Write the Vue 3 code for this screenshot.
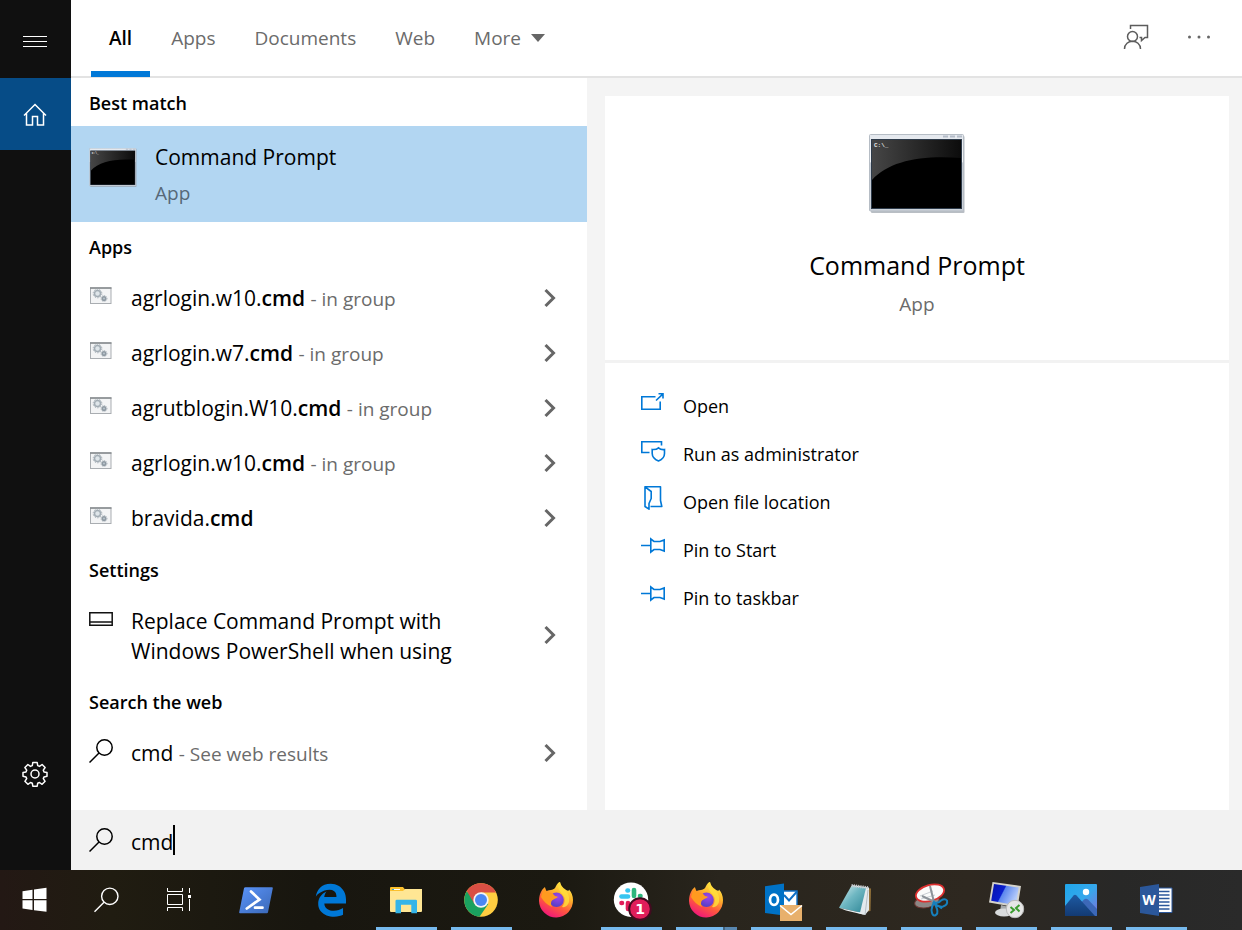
<script setup>
import { ref } from 'vue'

const query = ref('cmd')
const tabs = ['All', 'Apps', 'Documents', 'Web', 'More']
const activeTab = ref('All')

const apps = [
  { name: 'agrlogin.w10.', hint: '- in group' },
  { name: 'agrlogin.w7.', hint: '- in group' },
  { name: 'agrutblogin.W10.', hint: '- in group' },
  { name: 'agrlogin.w10.', hint: '- in group' },
  { name: 'bravida.', hint: '' },
]

const actions = [
  { label: 'Open', icon: 'open' },
  { label: 'Run as administrator', icon: 'admin' },
  { label: 'Open file location', icon: 'folder' },
  { label: 'Pin to Start', icon: 'pin' },
  { label: 'Pin to taskbar', icon: 'pin' },
]

const pinned = [
  { id: 'powershell', label: 'Windows PowerShell', state: '' },
  { id: 'edge', label: 'Microsoft Edge', state: '' },
  { id: 'explorer', label: 'File Explorer', state: 'open' },
  { id: 'chrome', label: 'Google Chrome', state: 'open' },
  { id: 'firefox', label: 'Firefox', state: '' },
  { id: 'slack', label: 'Slack', state: 'open' },
  { id: 'firefox', label: 'Firefox windows', state: 'stacked' },
  { id: 'outlook', label: 'Outlook', state: 'open' },
  { id: 'notepad', label: 'Notepad', state: 'open' },
  { id: 'snip', label: 'Snipping Tool', state: 'open' },
  { id: 'rdp', label: 'Remote Desktop', state: 'open' },
  { id: 'photos', label: 'Photos', state: 'open' },
  { id: 'word', label: 'Word', state: 'open' },
]
</script>

<template>
  <div class="screen">
    <svg class="defs" width="0" height="0" aria-hidden="true">
      <defs>
        <linearGradient id="frame" x1="0" y1="0" x2="0" y2="1">
          <stop offset="0" stop-color="#e4e8ee" /><stop offset=".36" stop-color="#f4f6f8" /><stop offset=".37" stop-color="#c3cad3" /><stop offset="1" stop-color="#ccd2da" />
        </linearGradient>
        <linearGradient id="gloss" x1="0" y1="0" x2="1" y2="0">
          <stop offset="0" stop-color="#464646" /><stop offset="1" stop-color="#0c0c0c" />
        </linearGradient>
        <linearGradient id="ps" x1="0" y1="0" x2="1" y2="1">
          <stop offset="0" stop-color="#5a94fa" /><stop offset="1" stop-color="#3a67b5" />
        </linearGradient>
        <linearGradient id="fox" x1=".8" y1="0" x2=".3" y2="1">
          <stop offset="0" stop-color="#fff14f" /><stop offset=".35" stop-color="#ffb52b" /><stop offset=".65" stop-color="#ff5a3c" /><stop offset="1" stop-color="#f0137e" />
        </linearGradient>
        <radialGradient id="globe" cx=".6" cy=".3" r=".8">
          <stop offset="0" stop-color="#a044e8" /><stop offset="1" stop-color="#4a3fc0" />
        </radialGradient>
        <linearGradient id="note" x1="0" y1="0" x2="1" y2="1">
          <stop offset="0" stop-color="#d8eef0" /><stop offset=".45" stop-color="#6fb7c2" /><stop offset="1" stop-color="#2d8696" />
        </linearGradient>
        <linearGradient id="crt" x1="0" y1="0" x2="1" y2=".4">
          <stop offset="0" stop-color="#0713a8" /><stop offset=".48" stop-color="#0a1fd0" /><stop offset=".52" stop-color="#5b86ee" /><stop offset="1" stop-color="#b5cbfa" />
        </linearGradient>
        <linearGradient id="sky" x1="0" y1="0" x2="1" y2="1">
          <stop offset="0" stop-color="#1fa6ea" /><stop offset=".5" stop-color="#35a8ec" /><stop offset="1" stop-color="#7f6fd8" />
        </linearGradient>
        <linearGradient id="hill" x1="0" y1="0" x2="0" y2="1">
          <stop offset="0" stop-color="#1d5aa3" /><stop offset="1" stop-color="#133a73" />
        </linearGradient>
        <symbol id="prompt" viewBox="0 0 96 79">
          <rect x="2" y="2" width="93.500" height="77" rx="1" fill="#8b939c" opacity=".6" />
          <rect x=".5" y=".5" width="94" height="76.500" rx="1" fill="url(#frame)" stroke="#b6bdc5" />
          <path d="M74 2.500h5m2 0h5m2 0h5" stroke="#b4bcc8" stroke-width="2" />
          <rect x="2" y="5" width="91" height="70" fill="#2e3b4a" />
          <rect x="3" y="6" width="89" height="68" fill="#000" />
          <path d="M3 6H92V24C52 21 20 27 3 46Z" fill="url(#gloss)" />
          <text x="5" y="13" font-size="6" font-weight="700" font-family="'Liberation Mono', monospace" fill="#e6e6e6">C:\_</text>
        </symbol>
        <symbol id="glass" viewBox="0 0 24 24">
          <circle cx="15.500" cy="8.500" r="7.700" fill="none" stroke="currentColor" stroke-width="1.500" />
          <path d="M10 14L.5 23.500" stroke="currentColor" stroke-width="1.500" />
        </symbol>
      </defs>
    </svg>

    <div class="main">
      <nav class="rail" aria-label="Search navigation">
        <button class="rail-btn menu" aria-label="Menu">
          <svg width="24" height="12" viewBox="0 0 24 12"><path d="M0 1.500H24M0 6.500H24M0 11.500H24" stroke="#fff" /></svg>
        </button>
        <button class="rail-btn home" aria-label="Home">
          <svg width="24" height="24" viewBox="0 0 24 24" fill="none" stroke="#fff" stroke-width="1.500">
            <path d="M1 13.500L12 2.500L23 13.500M3.500 11.500V23H9.500V14.500H14.500V23H20.500V11.500" />
          </svg>
        </button>
        <button class="rail-btn gear" aria-label="Settings">
          <svg width="26" height="26" viewBox="0 0 26 26" fill="none" stroke="#fff" stroke-width="1.500" stroke-linejoin="round">
            <path d="M10.800 1.500h4.400l.5 3.100 1.800.8 2.600-1.900 3 3-1.800 2.700.7 1.700 3 .5v3.900l-3 .6-.7 1.700 1.800 2.700-3 3-2.600-1.800-1.800.7-.5 3h-4.400l-.5-3-1.800-.7-2.600 1.800-3-3 1.800-2.700-.7-1.700-3-.6v-3.900l3-.5.700-1.700-1.800-2.700 3-3 2.600 1.900 1.800-.8z" />
            <circle cx="13" cy="13" r="4" />
          </svg>
        </button>
      </nav>

      <div class="panel">
        <header class="top">
          <div class="tabs" role="tablist">
            <button v-for="t in tabs" :key="t" role="tab" class="tab" :class="{ active: t === activeTab }" :aria-selected="t === activeTab" @click="activeTab = t">
              {{ t }}<svg v-if="t === 'More'" width="14" height="8" viewBox="0 0 14 8"><path d="M0 0H14L7 8Z" fill="#666" /></svg>
            </button>
          </div>
          <div class="tools">
            <button aria-label="Feedback">
              <svg width="26" height="26" viewBox="0 0 26 26" fill="none" stroke="#5c5c5c" stroke-width="1.500">
                <circle cx="9.500" cy="12.500" r="5" />
                <path d="M1.500 25C1.500 14.700 17.500 14.700 17.500 25M7.500 5V1.500H24.500V13.500H22L18.500 16.500V13.500H16.500" />
              </svg>
            </button>
            <button aria-label="More options">
              <svg width="24" height="4" viewBox="0 0 24 4" fill="#666"><circle cx="2.500" cy="2" r="1.500" /><circle cx="12" cy="2" r="1.500" /><circle cx="21.500" cy="2" r="1.500" /></svg>
            </button>
          </div>
        </header>

        <div class="content">
          <section class="results">
            <h2>Best match</h2>
            <button class="best">
              <svg width="48" height="39"><use href="#prompt" /></svg>
              <span><span class="title">Command Prompt</span><span class="kind">App</span></span>
            </button>

            <h2>Apps</h2>
            <ul>
              <li v-for="(a, i) in apps" :key="i">
                <button class="item">
                  <svg class="ico" width="24" height="18" viewBox="0 0 24 18">
                    <rect x="1.500" y="1" width="20.500" height="15.500" fill="#f3f4f5" stroke="#a9adb1" />
                    <path d="M1 1H22.500" stroke="#84888d" stroke-width="1.500" />
                    <circle cx="8.500" cy="6.500" r="3" fill="#dfe6ea" stroke="#a3adb5" stroke-width="1.500" />
                    <circle cx="8.500" cy="6.500" r="4.300" fill="none" stroke="#a3adb5" stroke-dasharray="1.500 1.200" />
                    <circle cx="15" cy="11.500" r="1.800" fill="#b7c2ca" stroke="#8f9aa3" stroke-width="1.500" />
                    <circle cx="15" cy="11.500" r="3" fill="none" stroke="#a3adb5" stroke-dasharray="1 1" />
                  </svg>
                  <span class="label">{{ a.name }}<b>cmd</b> <small>{{ a.hint }}</small></span>
                </button>
                <button class="more" :aria-label="'Details for ' + a.name + 'cmd'">
                  <svg width="12" height="18" viewBox="0 0 12 18"><path d="M1.500 1L9.500 9L1.500 17" fill="none" stroke="#666" stroke-width="3" /></svg>
                </button>
              </li>
            </ul>

            <h2>Settings</h2>
            <ul>
              <li class="tall">
                <button class="item">
                  <svg class="ico" width="24" height="14" viewBox="0 0 24 14"><path d="M.8.800H23.200V13.200H.8ZM.8 10H23.200" fill="none" stroke="#111" stroke-width="1.500" /></svg>
                  <span class="label">Replace Command Prompt with Windows PowerShell when using</span>
                </button>
                <button class="more" aria-label="Details for setting">
                  <svg width="12" height="18" viewBox="0 0 12 18"><path d="M1.500 1L9.500 9L1.500 17" fill="none" stroke="#666" stroke-width="3" /></svg>
                </button>
              </li>
            </ul>

            <h2>Search the web</h2>
            <ul>
              <li>
                <button class="item">
                  <svg class="ico" width="24" height="24"><use href="#glass" /></svg>
                  <span class="label">cmd <small>- See web results</small></span>
                </button>
                <button class="more" aria-label="Details for web results">
                  <svg width="12" height="18" viewBox="0 0 12 18"><path d="M1.500 1L9.500 9L1.500 17" fill="none" stroke="#666" stroke-width="3" /></svg>
                </button>
              </li>
            </ul>
          </section>

          <section class="detail">
            <div class="hero">
              <svg width="96" height="79"><use href="#prompt" /></svg>
              <h1>Command Prompt</h1>
              <p>App</p>
            </div>
            <div class="actions">
              <button v-for="a in actions" :key="a.label">
                <svg class="ico" width="24" height="24" viewBox="0 0 24 24" fill="none" stroke="#0078d7" stroke-width="1.600">
                  <path v-if="a.icon === 'open'" d="M14.500 6.800H.8V19.200H19.200V11.500M15 10.500L22 3.800M17.500 3.800H22V8.500" />
                  <template v-else-if="a.icon === 'admin'">
                    <path d="M8.500 14.500H.8V3.800H20.500V7.500" />
                    <path d="M17.500 9.800C19 11.200 21 11.800 23.500 11.500V15.500C23.500 19 21 21.500 17.500 23C14 21.500 11.200 19 11.200 15.500V11.500C14 11.800 16 11.200 17.500 9.800Z" />
                  </template>
                  <path v-else-if="a.icon === 'folder'" d="M4 .8H19.500V14.500L20.800 20.500H9.500M4 .8V20.500L8 23.200V17.500L10.200 12.500V5.500L4 .8Z" stroke-linejoin="round" />
                  <path v-else d="M0 11.500H9.500M9.800 5V18L13 15.500H19L23.200 17V6L19 7.500H13L9.800 5Z" />
                </svg>
                <span>{{ a.label }}</span>
              </button>
            </div>
          </section>
        </div>

        <label class="search">
          <svg width="24" height="24" aria-hidden="true"><use href="#glass" /></svg>
          <input v-model="query" type="text" aria-label="Search" />
          <span class="caret"></span>
        </label>
      </div>
    </div>

    <footer class="taskbar">
      <div class="system">
        <button aria-label="Start">
          <svg width="36" height="36" viewBox="0 0 36 36" fill="#fff"><path d="M5.500 9.200L15.500 7.700V17H5.500ZM17 7.500L29.500 5.800V17H17ZM5.500 18.300H15.500V28L5.500 26.600ZM17 18.300H29.500V29.800L17 28.200Z" /></svg>
        </button>
        <button aria-label="Search">
          <svg width="36" height="36" viewBox="0 0 36 36" fill="none" stroke="#fff" stroke-width="1.400"><circle cx="20.800" cy="14.300" r="8.200" /><path d="M15 20.200L5.500 29.700" /></svg>
        </button>
        <button aria-label="Task view">
          <svg width="36" height="36" viewBox="0 0 36 36" fill="none" stroke="#fff"><path d="M6.500 6V9.500H21.500V6M6.500 12.500H21.500V22.500H6.500ZM6.500 29V25.500H21.500V29M28.500 6V11M28.500 17V29" /><path d="M27 13h3v3h-3z" fill="#fff" stroke="none" /></svg>
        </button>
      </div>
      <div class="pinned">
        <button v-for="(p, i) in pinned" :key="i" :class="p.state" :aria-label="p.label">
          <svg width="36" height="36" viewBox="0 0 36 36">
            <g v-if="p.id === 'powershell'">
              <path d="M7.500 5.300H34Q35 5.300 34.800 6.300L30 30.300Q29.800 31.300 28.800 31.300H2Q1 31.300 1.200 30.300L6 6.300Q6.200 5.300 7.500 5.300Z" fill="url(#ps)" />
              <path d="M13 9.500L21.500 17.500L8.800 26.500M17 25.700H24.500" fill="none" stroke="#fff" stroke-width="2.700" stroke-linecap="round" />
            </g>
            <path v-else-if="p.id === 'edge'" transform="translate(2.200 1.800) scale(1.300)" fill="#0078d7" d="M.48 10C1.140 4.800 4.700.07 12 0c4.400.08 8 2.080 10.200 5.880 1.100 2 1.430 4.100 1.500 6.450v2.770H7.030c.08 6.850 10.080 6.620 14.380 3.600v5.200c-2.520 1.400-8.230 2.100-12.660.4C5 22.900 2.300 19.700 2.320 15.800 2.200 11 4.800 7.800 8.760 6c-.84 1.040-1.480 2.180-1.810 4.160h9.400S16.900 4.600 11.020 4.600C5.480 4.800 1.490 8 .48 10Z" />
            <g v-else-if="p.id === 'explorer'">
              <path d="M2 6Q2 5 3 5H15L17 7.500V10H2Z" fill="#fbc02d" /><path d="M4 7.500h8" stroke="#fff" /><path d="M4 7.500h2" stroke="#32a4dc" />
              <path d="M2 9H15L17 7H34V29Q34 30 33 30H3Q2 30 2 29Z" fill="#ffe694" />
              <path d="M7.500 31.300V19Q7.500 17.700 8.800 17.700H27.800Q29 17.700 29 19V31.300H23.300V22.700H13V31.300Z" fill="#35b4e8" />
            </g>
            <g v-else-if="p.id === 'chrome'">
              <circle cx="18" cy="18" r="16.800" fill="#ffcd41" />
              <path d="M18 18L3.500 9.500A16.800 16.800 0 0 0 16.500 34.700L25.300 22Z" fill="#1aa15f" />
              <path d="M18 10.400H33A16.800 16.800 0 0 0 3.800 9L11.400 21.800L18 18Z" fill="#d94f44" />
              <circle cx="18" cy="18" r="7.700" fill="#f3f3f3" /><circle cx="18" cy="18" r="6" fill="#4a87f2" />
            </g>
            <g v-else-if="p.id === 'firefox'">
              <path d="M1 19C1 13 3 8 7 5Q7 8 8.500 9Q11 8 13 8Q17 7 17.500 5Q20 0 22 0Q23 5 27.500 7.500Q31 10 31 7.500Q35 12 35 18A17 17 0 0 1 1 19Z" fill="url(#fox)" />
              <path d="M20 4Q21 1 22 0Q22.500 5 27 8Q32 12 31 20Q29 26 24 25Q29 18 25 13Q20 8 20 4Z" fill="#ffdf3c" opacity=".8" />
              <circle cx="18.500" cy="17.800" r="7.300" fill="url(#globe)" />
              <path d="M3 15Q5 8 7 6Q8 9 10 10.500Q14 10 17 14Q20 14 19.500 15.500Q16 17 14 18.500Q12 21 14 25Q7 22 3 15Z" fill="#ff9a1f" />
            </g>
            <g v-else-if="p.id === 'slack'">
              <circle cx="18" cy="17.700" r="17.200" fill="#fff" />
              <g stroke-linecap="round" stroke-width="4.600">
                <path d="M8.500 14.500H15" stroke="#36c5f0" /><path d="M14.500 8.500H15" stroke="#36c5f0" />
                <path d="M21 8V14" stroke="#2eb67d" /><path d="M27 14H27.500" stroke="#2eb67d" />
                <path d="M15 21V27M8.500 21H9" stroke="#e01e5a" /><path d="M21 21H28" stroke="#ecb22e" />
              </g>
              <circle cx="27" cy="27" r="10.800" fill="#e01e5a" stroke="#430b20" stroke-width="2" />
              <text x="27" y="32" text-anchor="middle" font-family="'DejaVu Sans', sans-serif" font-weight="700" font-size="14" fill="#fff">1</text>
            </g>
            <g v-else-if="p.id === 'outlook'">
              <path d="M20 9H34V24H20Z" fill="#fff" stroke="#0f6fc5" stroke-width="1.400" /><path d="M21 13L26 18.500L34 9.500" fill="none" stroke="#0f6fc5" stroke-width="2" />
              <path d="M2 4.200L21 1.500V33.500L2 31Z" fill="#0072c6" />
              <ellipse cx="11" cy="17.800" rx="4" ry="5.200" fill="none" stroke="#fff" stroke-width="2.700" />
              <path d="M17 23H39V39H17Z" fill="#e8b06c" /><path d="M17 23.500L28 32.500L39 23.500" fill="none" stroke="#fff" stroke-width="1.600" />
            </g>
            <g v-else-if="p.id === 'notepad'">
              <path d="M29 6L33 6.500L32.500 29L27 30Z" fill="#92713a" />
              <path d="M14 3L31 5.500L31 28L27 33L20 31Z" fill="#e4eaed" /><path d="M30 8L27 33" stroke="#b6bec4" />
              <path d="M13.300 4L28 6L22 30.500L1 25.700Z" fill="url(#note)" />
              <path d="M1 25.700L22 30.500L27 33L8 28.500Z" fill="#edf3f5" />
              <path d="M13.500 3.500L31 5.800" stroke="#c9ccd0" stroke-width="3" stroke-dasharray="1.200 1" />
            </g>
            <g v-else-if="p.id === 'snip'">
              <ellipse cx="14" cy="19.500" rx="12.500" ry="6" transform="rotate(-12 14 19.500)" fill="#8d8785" stroke="#713834" />
              <ellipse cx="17" cy="11" rx="14.500" ry="8" transform="rotate(-16 17 11)" fill="#fafafa" stroke="#dc2f2f" stroke-width="1.800" />
              <path d="M7 14L20 9M8 17L22 13" stroke="#c9ced4" />
              <path d="M17 4L21 20M9 14L24 21" stroke="#8c9299" stroke-width="2" />
              <path d="M20 20Q25 22 28 18.500Q32 16 34 18.500Q35 23 30 24.500Q25 25.500 20 20ZM21 20Q19 24 18.500 28Q19 34 22 33.500Q25.500 32 24 27Q23 24 21 20ZM23 23Q26 24 29 26.500" fill="none" stroke="#1680bd" stroke-width="2" />
            </g>
            <g v-else-if="p.id === 'rdp'">
              <path d="M13 23L21 25L20 30H12Z" fill="#a6a9ab" /><ellipse cx="16" cy="30.500" rx="9" ry="4" fill="#d9dbdc" />
              <path d="M4.500 0L33 4L29.500 25.500L1 20.500Z" fill="#d5d3cb" /><path d="M6 2L30.700 5.500L27.800 23.300L3.200 18.800Z" fill="url(#crt)" />
              <circle cx="27" cy="27" r="8.700" fill="#e6e6e6" stroke="#b9b9b9" />
              <path d="M22.500 25L26 28L22.500 31M31.500 23L28 26L31.500 29.500" fill="none" stroke="#3b9c2f" stroke-width="2" />
            </g>
            <g v-else-if="p.id === 'photos'">
              <rect x="2" y="2" width="32" height="32" rx="1" fill="url(#sky)" />
              <path d="M14 25L21 17.500Q23 16 25 17.500L34 27V34H18Z" fill="#3c68b8" />
              <path d="M2 24L10.500 13.500Q12 12 13.500 13.500L32 34H2Z" fill="url(#hill)" /><circle cx="23" cy="10" r="3.200" fill="#fff" />
            </g>
            <g v-else>
              <path d="M20 6H34V30.500H20Z" fill="#fff" stroke="#2b579a" /><path d="M21 9.500H31.500M21 13H31.500M21 16.500H31.500M21 20H31.500M21 23.500H31.500M21 27H31.500" stroke="#2b579a" stroke-width="1.500" />
              <path d="M2 5L21 2V34L2 31Z" fill="#2b579a" />
              <text x="11" y="23" text-anchor="middle" font-family="'Open Sans', sans-serif" font-weight="700" font-size="14" fill="#fff">W</text>
            </g>
          </svg>
        </button>
      </div>
    </footer>
  </div>
</template>

<style>
body {
  margin: 0;
}
</style>

<style scoped>
* {
  box-sizing: border-box;
}
.screen {
  min-height: 100vh;
  display: flex;
  flex-direction: column;
  font-family: 'Open Sans', 'Noto Sans', sans-serif;
  font-size: 18px;
  color: #000;
  background: #fff;
}
.defs {
  position: absolute;
}
button {
  border: 0;
  padding: 0;
  background: none;
  font: inherit;
  color: inherit;
  text-align: left;
}
svg {
  flex: none;
  display: block;
  overflow: visible;
}
h1,
h2,
p,
ul {
  margin: 0;
  padding: 0;
  font-weight: 400;
  list-style: none;
}
.main {
  flex: 1;
  display: flex;
}
.rail {
  flex: none;
  width: 71px;
  display: flex;
  flex-direction: column;
  padding-bottom: 60px;
  background: #101010;
}
.rail-btn {
  height: 72px;
  padding-right: 1px;
  display: flex;
  align-items: center;
  justify-content: center;
}
.menu {
  height: 78px;
  padding-top: 4px;
}
.home {
  background: #064c87;
}
.gear {
  margin-top: auto;
}
.panel {
  flex: 1;
  min-width: 0;
  display: flex;
  flex-direction: column;
}
.top {
  height: 78px;
  display: flex;
  justify-content: space-between;
  padding: 0 31px 0 20px;
  box-shadow: inset 0 -2px #e3e3e3;
}
.tabs {
  display: flex;
  gap: 3px;
}
.tab {
  height: 77px;
  padding: 4px 18px 0;
  display: flex;
  align-items: center;
  gap: 10px;
  border-bottom: 6px solid transparent;
  font-size: 19px;
  color: #6b6b6b;
}
.tab.active {
  color: #000;
  font-weight: 600;
  border-color: #0078d7;
}
.tools {
  display: flex;
  align-items: center;
  gap: 38px;
  padding-bottom: 4px;
}
.content {
  flex: 1;
  display: flex;
  background: #f4f4f4;
}
.results {
  flex: 0 1 516px;
  min-width: 0;
  background: #fff;
}
h2 {
  height: 48px;
  padding-left: 18px;
  line-height: 50px;
  font-size: 18px;
  font-weight: 600;
}
.best {
  width: 100%;
  min-height: 96px;
  padding: 12px 18px;
  display: flex;
  gap: 18px;
  background: #b2d6f2;
}
.best svg {
  margin-top: 10px;
}
.title,
.kind {
  display: block;
  line-height: 36px;
}
.title {
  padding-top: 1px;
  font-size: 21px;
}
.kind {
  margin-bottom: -1px;
  font-size: 19px;
  color: #566878;
}
li {
  min-height: 55px;
  display: flex;
}
.item {
  flex: 1;
  min-width: 0;
  display: flex;
  align-items: center;
  gap: 18px;
  padding-left: 18px;
}
.item .ico {
  margin-bottom: 4px;
}
.label {
  padding-top: 2px;
  font-size: 21px;
  line-height: 30px;
}
.label b {
  font-weight: 600;
}
small {
  font-size: 19px;
  color: #6b6b6b;
}
.tall {
  min-height: 84px;
}
.tall .item {
  align-items: flex-start;
  padding: 11px 40px 0 18px;
}
.tall .ico {
  margin-top: 8px;
}
.more {
  flex: none;
  width: 74px;
  display: flex;
  align-items: center;
  justify-content: center;
}
.detail {
  flex: 1;
  min-width: 0;
  margin: 18px 13px 0 18px;
  background: #fff;
}
.hero {
  min-height: 267px;
  padding-top: 38px;
  display: flex;
  flex-direction: column;
  align-items: center;
  border-bottom: 3px solid #f2f2f2;
}
h1 {
  margin-top: 33px;
  font-size: 25px;
  line-height: 38px;
}
.hero p {
  font-size: 19px;
  line-height: 40px;
  color: #6b6b6b;
}
.actions {
  padding: 19px 36px;
}
.actions button {
  width: 100%;
  height: 48px;
  display: flex;
  align-items: center;
  gap: 18px;
}
.actions .ico {
  margin-bottom: 8px;
}
.search {
  height: 60px;
  padding-left: 18px;
  display: flex;
  align-items: center;
  background: #f2f2f2;
}
.search input {
  field-sizing: content;
  margin-left: 18px;
  padding: 4px 0 0;
  border: 0;
  outline: 0;
  background: none;
  font: inherit;
  font-size: 21px;
}
.caret {
  width: 2px;
  height: 30px;
  background: #000;
}
.taskbar {
  height: 60px;
  display: flex;
  gap: 11px;
  background: linear-gradient(90deg, #231814, #201c11 9%, #18160f 25%, #1b1911 45%, #29251d 58%, #2e2820 78%, #282827 90%, #2a2a2a);
}
.system {
  display: flex;
  gap: 1px;
}
.pinned {
  display: flex;
  gap: 14px;
}
.taskbar button {
  width: 71px;
  padding-right: 1px;
  display: flex;
  align-items: center;
  justify-content: center;
}
.pinned button {
  width: 61px;
}
.pinned .open {
  box-shadow: inset 0 -3px #76b9ed;
}
.pinned .stacked {
  background: linear-gradient(90deg, #76b9ed 47px, #45647e 47px, #45647e 49px, #5987b0 49px) bottom / 100% 3px no-repeat;
}
</style>
